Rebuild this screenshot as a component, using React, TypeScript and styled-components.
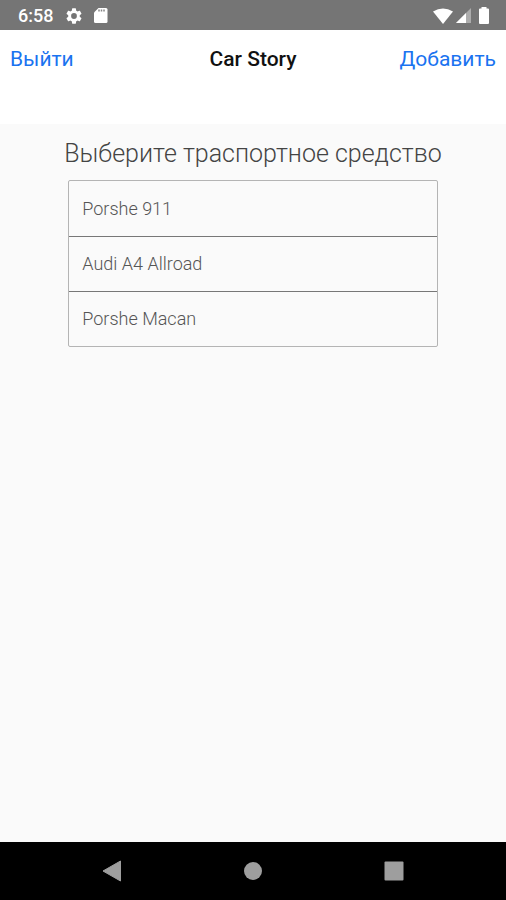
import React from "react";
import styled, { createGlobalStyle } from "styled-components";

const GlobalStyle = createGlobalStyle`
  * { box-sizing: border-box; }
  body { margin: 0; background: #fafafa; }
  button { margin: 0; padding: 0; border: 0; background: none; font: inherit; cursor: pointer; }
`;

const Screen = styled.div`
  display: flex;
  flex-direction: column;
  min-height: 100vh;
  background: #fafafa;
  font-family: Roboto, "Liberation Sans", sans-serif;
`;

const StatusBar = styled.div`
  display: flex;
  align-items: center;
  justify-content: space-between;
  height: 30px;
  padding: 1px 16px 0 18px;
  background: #757575;
  color: #fff;
`;

const StatusGroup = styled.div<{ $gap: number }>`
  display: flex;
  align-items: center;
  gap: ${({ $gap }) => $gap}px;
`;

const Clock = styled.time`
  margin-right: 2px;
  font-size: 18px;
  font-weight: 500;
  line-height: 20px;
`;

const Glyph = styled.svg`
  display: block;
  fill: currentColor;
`;

const Header = styled.header`
  display: grid;
  grid-template-columns: 1fr auto 1fr;
  align-items: start;
  height: 94px;
  padding: 16px 10px 0;
  background: #fff;
`;

const Title = styled.h1`
  margin: 0;
  color: #111;
  font-size: 21px;
  font-weight: 500;
  line-height: 26px;
`;

const HeaderButton = styled.button<{ $side: "start" | "end" }>`
  justify-self: ${({ $side }) => $side};
  && {
    color: #1a73f0;
    font-size: 21px;
    line-height: 26px;
  }
`;

const Content = styled.main`
  display: flex;
  flex: 1;
  flex-direction: column;
  align-items: center;
  padding-top: 14px;
`;

const Heading = styled.h2`
  margin: 0 0 10px;
  color: #444;
  font-size: 25px;
  font-weight: 300;
  line-height: 32px;
`;

const VehicleList = styled.ul`
  width: 73%;
  margin: 0;
  padding: 0;
  list-style: none;
  border: 1px solid #b4b4b4;
  border-radius: 2px;
`;

const VehicleItem = styled.li`
  height: 55px;

  & + & {
    border-top: 1px solid #777;
  }
`;

const VehicleButton = styled.button`
  && {
    display: block;
    width: 100%;
    height: 100%;
    padding: 0 13px;
    color: #555;
    font-size: 18px;
    font-weight: 300;
    line-height: 20px;
    text-align: left;
  }
`;

const NavBar = styled.nav`
  display: grid;
  grid-template-columns: repeat(3, 1fr);
  align-items: center;
  height: 58px;
  padding: 0 42px;
  background: #000;
  color: #9e9e9e;
`;

const NavButton = styled.button`
  justify-self: center;
  && { color: inherit; }
`;

const vehicles = ["Porshe 911", "Audi A4 Allroad", "Porshe Macan"];

export default function App() {
  return (
    <Screen>
      <GlobalStyle />
      <StatusBar>
        <StatusGroup $gap={11}>
          <Clock>6:58</Clock>
          <Glyph width="16" height="16" viewBox="2 2 20 20" aria-hidden="true">
            <path d="M19.14 12.94c.04-.3.06-.61.06-.94s-.02-.64-.07-.94l2.03-1.58a.49.49 0 0 0 .12-.61l-1.92-3.32a.49.49 0 0 0-.59-.22l-2.39.96a7 7 0 0 0-1.62-.94l-.36-2.54A.48.48 0 0 0 13.92 2.4h-3.84a.48.48 0 0 0-.48.41l-.36 2.54a7.4 7.4 0 0 0-1.62.94l-2.39-.96a.48.48 0 0 0-.59.22L2.72 8.87a.48.48 0 0 0 .12.61l2.03 1.58c-.05.3-.09.63-.09.94s.02.64.07.94l-2.03 1.58a.49.49 0 0 0-.12.61l1.92 3.32c.12.22.37.29.59.22l2.39-.96c.5.38 1.03.7 1.62.94l.36 2.54c.05.24.24.41.48.41h3.84c.24 0 .44-.17.48-.41l.36-2.54a7 7 0 0 0 1.62-.94l2.39.96c.22.08.47 0 .59-.22l1.92-3.32a.48.48 0 0 0-.12-.61zM12 15.6a3.6 3.6 0 1 1 0-7.2 3.6 3.6 0 0 1 0 7.2z" />
          </Glyph>
          <Glyph width="15" height="17" viewBox="0 0 15 17" aria-hidden="true">
            <path d="M5.500 1H13a1.500 1.500 0 0 1 1.500 1.500v12A1.500 1.500 0 0 1 13 16H2.500A1.500 1.500 0 0 1 1 14.500V5.500z" />
            <path d="M6 2.500v2M8.500 2.500v2M11 2.500v2" stroke="#858585" strokeWidth="1.500" />
          </Glyph>
        </StatusGroup>
        <StatusGroup $gap={3}>
          <Glyph width="20" height="16" viewBox="0 0 20 16" aria-hidden="true">
            <path d="M0 3.500Q10-2.500 20 3.500L10 16z" />
          </Glyph>
          <Glyph width="15" height="15" viewBox="0 0 15 15" aria-hidden="true">
            <path d="M15 0v15H0z" opacity=".4" />
            <path d="M10 5v10H0z" />
          </Glyph>
          <Glyph width="16" height="17" viewBox="0 0 16 17" aria-hidden="true">
            <path d="M7.500 0h5v1.500H14a1 1 0 0 1 1 1V16a1 1 0 0 1-1 1H6a1 1 0 0 1-1-1V2.500a1 1 0 0 1 1-1h1.500z" />
          </Glyph>
        </StatusGroup>
      </StatusBar>
      <Header>
        <HeaderButton type="button" $side="start">Выйти</HeaderButton>
        <Title>Car Story</Title>
        <HeaderButton type="button" $side="end">Добавить</HeaderButton>
      </Header>
      <Content>
        <Heading>Выберите траспортное средство</Heading>
        <VehicleList>
          {vehicles.map((name) => (
            <VehicleItem key={name}>
              <VehicleButton type="button">{name}</VehicleButton>
            </VehicleItem>
          ))}
        </VehicleList>
      </Content>
      <NavBar>
        <NavButton type="button" aria-label="Назад">
          <Glyph width="20" height="22" viewBox="0 0 20 22">
            <path d="M18.500 1v20L1 11z" stroke="currentColor" strokeLinejoin="round" />
          </Glyph>
        </NavButton>
        <NavButton type="button" aria-label="Домой">
          <Glyph width="20" height="20" viewBox="0 0 20 20">
            <circle cx="10" cy="10" r="9" />
          </Glyph>
        </NavButton>
        <NavButton type="button" aria-label="Недавние приложения">
          <Glyph width="20" height="20" viewBox="0 0 20 20">
            <rect width="19" height="19" x="0.500" y="0.500" rx="1" />
          </Glyph>
        </NavButton>
      </NavBar>
    </Screen>
  );
}
